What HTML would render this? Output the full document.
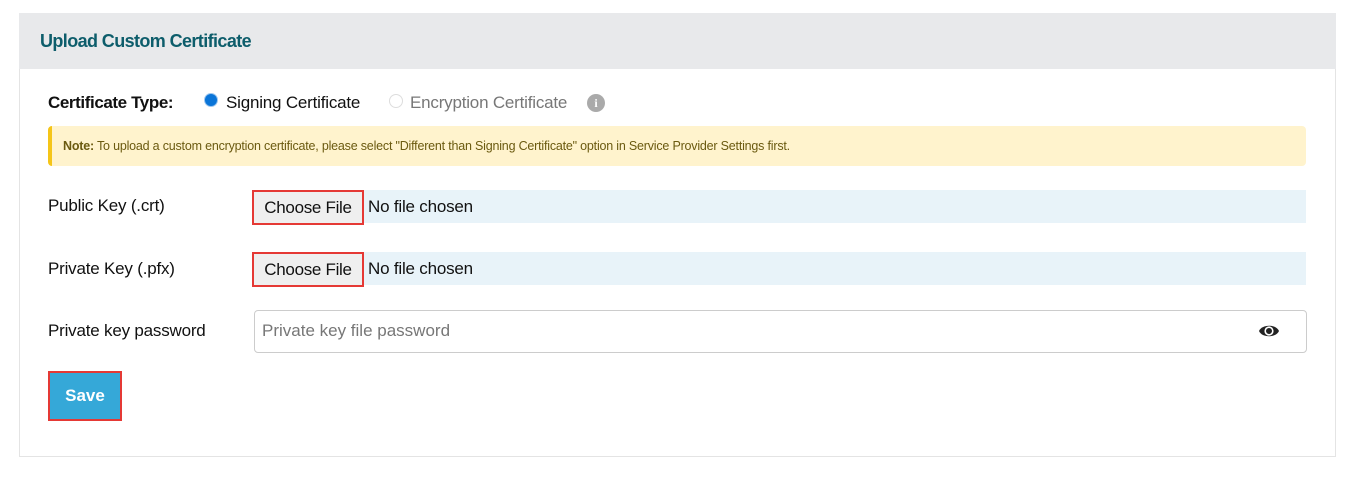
<!DOCTYPE html>
<html><head><style>
body{margin:0;width:1356px;height:479px;background:#fff;position:relative;font-family:"Liberation Sans",Arial,sans-serif;overflow:hidden}
.a{position:absolute}
.hdr{left:19px;top:13px;width:1317px;height:56px;background:#e8e9eb}
.card{left:19px;top:69px;width:1315px;height:387px;border:1px solid #e4e4e4;border-top:none}
.title{left:40px;top:31px;font-size:18px;font-weight:bold;color:#0d5d6b;letter-spacing:-0.6px}
.lbl{font-size:17px;color:#111;letter-spacing:-0.2px}
.note{left:48px;top:126px;width:1258px;height:40px;background:#fff3cd;border-left:4px solid #f5c518;border-radius:4px;box-sizing:border-box}
.file{height:33px;background:#e8f3f9;left:252px;width:1054px}
.btn{left:252px;width:108px;height:30px;border:2px solid #e53935;background:#efefef;font-size:17px;color:#111;text-align:center;line-height:30px;box-sizing:content-box;letter-spacing:-0.3px}
</style></head><body>
<div class="a hdr"></div>
<div class="a card"></div>
<div class="a title">Upload Custom Certificate</div>
<div class="a lbl" style="left:48px;top:93px;font-weight:bold;letter-spacing:-0.4px">Certificate Type:</div>
<div class="a" style="left:204px;top:93px;width:14px;height:14px;border-radius:50%;background:#0a75d8;border:1px solid #9cc6ef;box-sizing:border-box"></div>
<div class="a lbl" style="left:226px;top:93px">Signing Certificate</div>
<div class="a" style="left:389px;top:94px;width:12px;height:12px;border-radius:50%;border:1px solid #ddd"></div>
<div class="a lbl" style="left:410px;top:93px;color:#777">Encryption Certificate</div>
<div class="a" style="left:587px;top:94px;width:18px;height:18px;border-radius:50%;background:#aaa;color:#fff;font-size:12px;font-weight:bold;text-align:center;line-height:18px;font-family:'Liberation Serif',serif">i</div>
<div class="a note"></div>
<div class="a" style="left:63px;top:139px;font-size:12.5px;color:#6b5a10;letter-spacing:-0.2px"><b>Note:</b> To upload a custom encryption certificate, please select "Different than Signing Certificate" option in Service Provider Settings first.</div>
<div class="a lbl" style="left:48px;top:196px">Public Key (.crt)</div>
<div class="a file" style="top:190px"></div>
<div class="a btn" style="top:190px;height:31px;line-height:31px">Choose File</div>
<div class="a lbl" style="left:368px;top:197px">No file chosen</div>
<div class="a lbl" style="left:48px;top:259px">Private Key (.pfx)</div>
<div class="a file" style="top:252px"></div>
<div class="a btn" style="top:252px;height:31px;line-height:31px">Choose File</div>
<div class="a lbl" style="left:368px;top:259px">No file chosen</div>
<div class="a lbl" style="left:48px;top:321px">Private key password</div>
<div class="a" style="left:254px;top:310px;width:1051px;height:41px;border:1px solid #ccc;border-radius:4px"></div>
<div class="a" style="left:262px;top:321px;font-size:17px;color:#777">Private key file password</div>
<svg class="a" style="left:1258px;top:322px" width="22" height="18" viewBox="0 0 22 18"><path d="M1 9C4 2 18 2 21 9C18 16 4 16 1 9Z" fill="#222"/><circle cx="11" cy="9" r="4.6" fill="#fff"/><circle cx="11" cy="9" r="3" fill="#222"/></svg>
<div class="a" style="left:48px;top:371px;width:70px;height:46px;background:#35a8d8;border:2px solid #e53935;color:#fff;font-weight:bold;font-size:17px;text-align:center;line-height:46px">Save</div>
</body></html>
